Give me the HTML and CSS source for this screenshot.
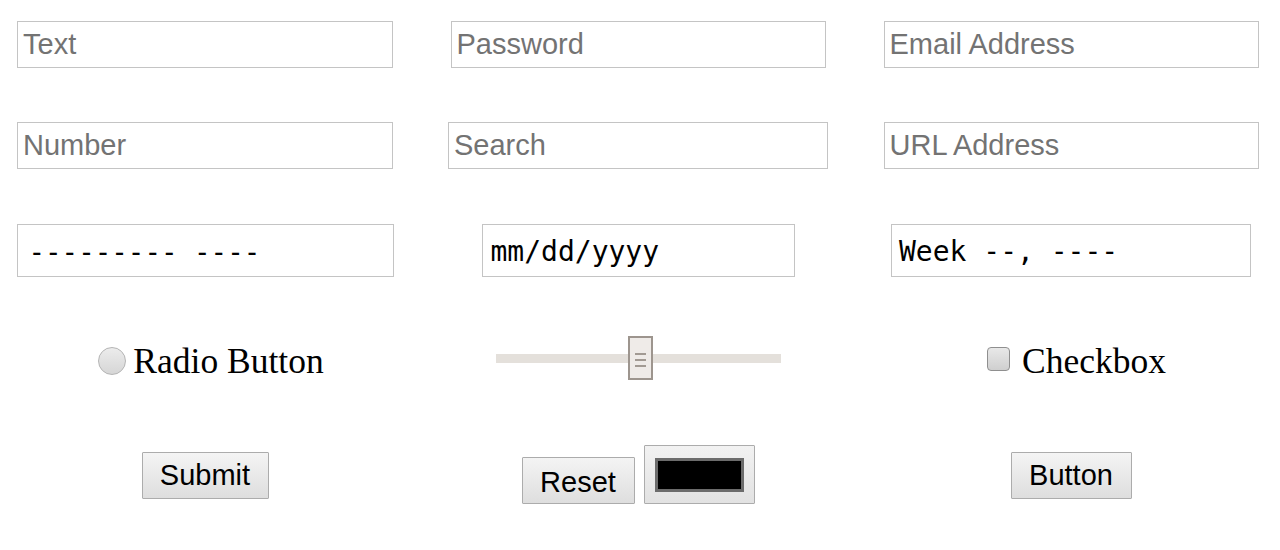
FILE: index.html
```html
<!DOCTYPE html>
<html lang="en">
<head>
<meta charset="utf-8">
<title>Form Controls</title>
<link rel="stylesheet" href="styles.css">
</head>
<body>
<main class="page">
  <div class="row row-1">
    <input class="field w-376" type="text" placeholder="Text">
    <input class="field w-375" type="password" placeholder="Password">
    <input class="field w-375" type="email" placeholder="Email Address">
  </div>
  <div class="row row-2">
    <input class="field w-376" type="text" placeholder="Number">
    <input class="field w-380" type="search" placeholder="Search">
    <input class="field w-375" type="url" placeholder="URL Address">
  </div>
  <div class="row row-3">
    <div class="mono-field w-377 pad-10">--------- ----</div>
    <div class="mono-field w-313 pad-9">mm/dd/yyyy</div>
    <div class="mono-field w-360 pad-8">Week --, ----</div>
  </div>
  <div class="row row-4">
    <label class="choice choice-radio"><span class="radio"></span><span class="choice-text">Radio Button</span></label>
    <div class="slider"><div class="slider-thumb"><i></i><i></i><i></i></div></div>
    <label class="choice choice-check"><span class="checkbox"></span><span class="choice-text">Checkbox</span></label>
  </div>
  <div class="row row-5">
    <div class="cell"><button class="btn btn-submit" type="button">Submit</button></div>
    <div class="cell cell-pair">
      <button class="btn btn-reset" type="button">Reset</button>
      <button class="btn btn-color" type="button"><span class="swatch"></span></button>
    </div>
    <div class="cell"><button class="btn btn-plain" type="button">Button</button></div>
  </div>
</main>
</body>
</html>
```
FILE: styles.css
```css
* { box-sizing: border-box; }
html, body { margin: 0; padding: 0; background: #ffffff; }
body { font-family: "Liberation Sans", Arial, sans-serif; color: #000; }

.page {
  padding: 21px 0 0 17px;
  width: 1280px;
  height: 550px;
  overflow: hidden;
}

.row {
  display: grid;
  grid-template-columns: repeat(3, 376px);
  column-gap: 57px;
  justify-items: center;
  align-items: center;
}
.row-1 { height: 47px; }
.row-2 { height: 47px; margin-top: 54px; }
.row-3 { height: 53px; margin-top: 55px; }
.row-4 { height: 44px; margin-top: 59px; }
.row-5 { height: 60px; margin-top: 65px; }

.field {
  height: 47px;
  border: 1px solid #c4c4c4;
  background: #fff;
  padding: 0 0 0 5px;
  margin: 0;
  font-family: "Liberation Sans", Arial, sans-serif;
  font-size: 29px;
  color: #000;
  outline: none;
  border-radius: 0;
  -webkit-appearance: none;
  appearance: none;
}
.field::placeholder { color: #737373; opacity: 1; }
.field::-webkit-search-cancel-button { display: none; }

.w-376 { width: 376px; }
.w-375 { width: 375px; }
.w-380 { width: 380px; }
.w-377 { width: 377px; }
.w-313 { width: 313px; }
.w-360 { width: 360px; }

.mono-field {
  height: 53px;
  border: 1px solid #c4c4c4;
  background: #fff;
  display: flex;
  align-items: center;
  padding-top: 2px;
  font-family: "DejaVu Sans Mono", "Liberation Mono", monospace;
  font-size: 27px;
  color: #000;
  white-space: pre;
}
.pad-10 { padding-left: 11px; font-size: 27.5px; }
.pad-9 { padding-left: 8px; font-size: 28px; }
.pad-8 { padding-left: 7px; font-size: 28px; }

.choice {
  display: flex;
  align-items: center;
  font-family: "Liberation Serif", "Times New Roman", serif;
  font-size: 35.5px;
  color: #000;
  margin-top: 7px;
}
.choice-radio { padding-left: 8px; }
.choice-check { padding-left: 5px; }
.choice-text { line-height: 1; }

.radio {
  width: 28px;
  height: 28px;
  border-radius: 50%;
  border: 1px solid #b4b4b4;
  background: linear-gradient(#ececec, #d6d6d6);
  margin-right: 7px;
  margin-top: -2px;
  margin-left: 4px;
}
.checkbox {
  width: 23px;
  height: 24px;
  border-radius: 4px;
  border: 1px solid #8f8f8f;
  background: linear-gradient(#e8e8e8, #cfcfcf);
  margin-right: 12px;
  margin-top: -6px;
  margin-left: 6px;
}

.slider {
  width: 285px;
  height: 9px;
  background: #e4e0db;
  display: flex;
  align-items: center;
}
.slider-thumb {
  flex: none;
  margin-left: 132px;
  width: 25px;
  height: 44px;
  border: 2px solid #9d958e;
  background: #efebe8;
  display: flex;
  flex-direction: column;
  align-items: center;
  justify-content: center;
  gap: 4px;
  padding-top: 4px;
}
.slider-thumb i {
  display: block;
  width: 11px;
  height: 2px;
  background: #a29a93;
}

.cell {
  display: flex;
  align-items: center;
  justify-content: center;
}
.cell-pair {
  align-items: flex-end;
  gap: 9px;
  height: 60px;
  padding-bottom: 1px;
}

.btn {
  margin: 0;
  border: 1px solid #acacac;
  border-radius: 1px;
  background: linear-gradient(#f4f4f4, #dedede);
  font-family: "Liberation Sans", Arial, sans-serif;
  font-size: 29px;
  color: #000;
  padding: 0;
  height: 47px;
  display: flex;
  align-items: center;
  justify-content: center;
}
.btn-submit { width: 127px; }
.btn-reset { width: 113px; padding-top: 3px; }
.btn-plain { width: 121px; }
.btn-color {
  width: 111px;
  height: 59px;
  background: linear-gradient(#f2f2f2, #e2e2e2);
}
.swatch {
  display: block;
  width: 89px;
  height: 34px;
  border: 3px solid #6c6c6c;
  background: #000;
}
```
